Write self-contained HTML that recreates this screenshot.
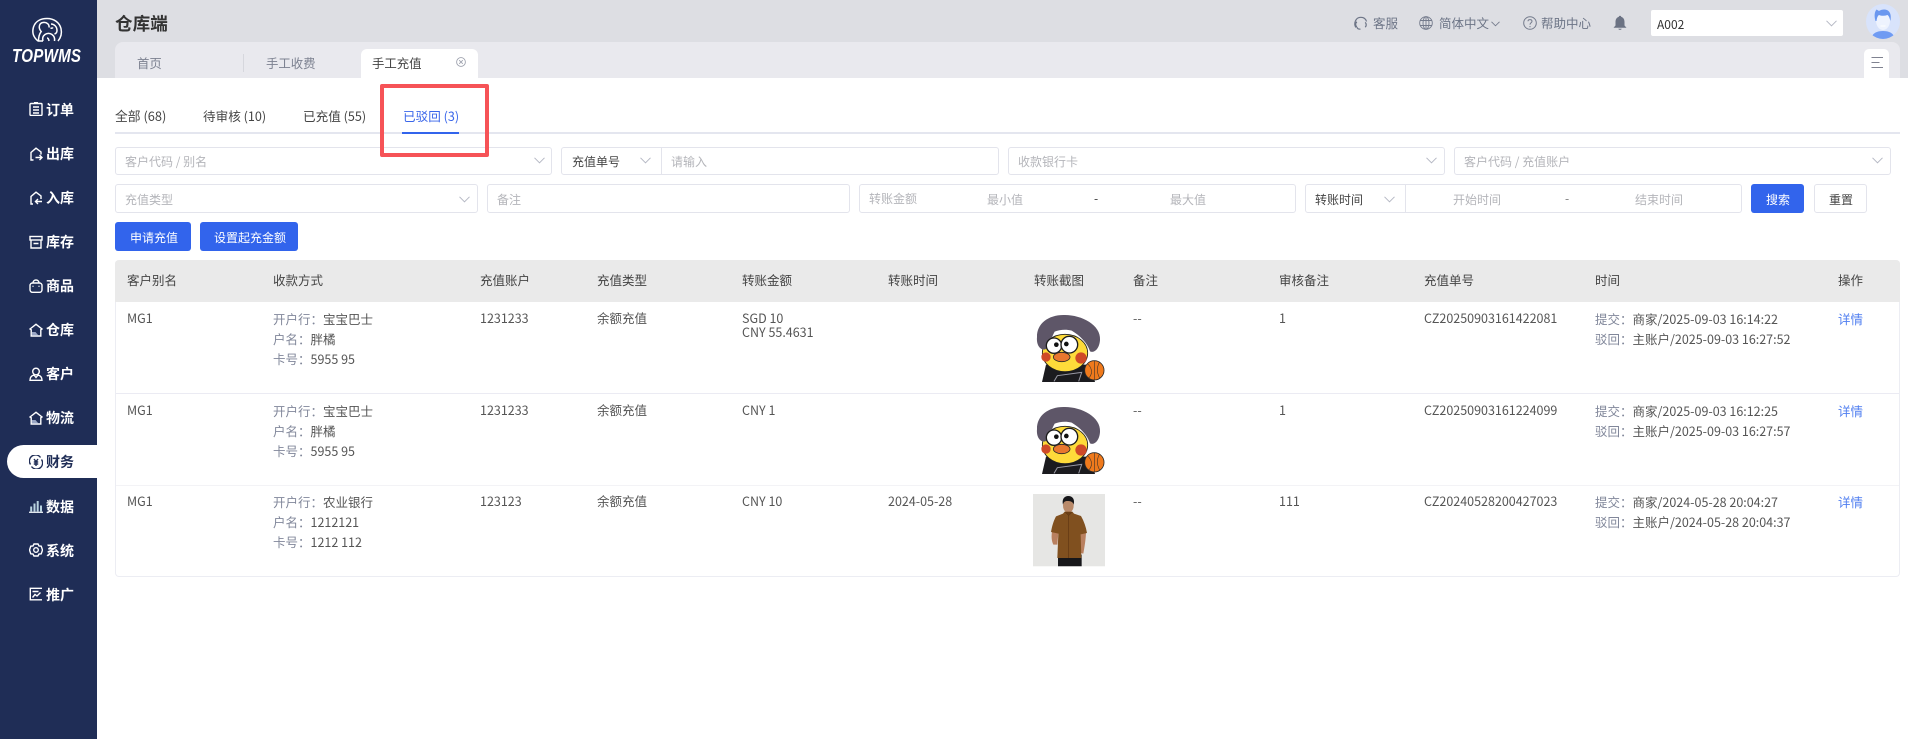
<!DOCTYPE html>
<html lang="zh"><head><meta charset="utf-8"><title>TOPWMS</title>
<style>
html,body{margin:0;padding:0;background:#fff}
body{width:1908px;height:739px;position:relative;overflow:hidden;font-family:"Noto Sans CJK SC","Liberation Sans",sans-serif;font-size:12.5px;color:#555}
div,svg{position:absolute}
.t{position:absolute;line-height:20px;height:20px;white-space:nowrap}
.b{position:absolute;box-sizing:border-box;background:#fff;border:1px solid #e3e4ec;border-radius:3px}
.ph{color:#b4b5ba}
.g{color:#81879a}
.h{color:#444}
.n{font-size:14px;font-weight:700;color:#fff;left:46px}
.ic{left:29px;width:14px;height:14px;fill:none;stroke:#fff;stroke-width:1.4}
.ch{fill:none;stroke:#b5b8c4;stroke-width:1}
.top{color:#6c7486;font-size:12.5px}
</style></head><body>

<!-- header -->
<div style="left:97px;top:0;width:1811px;height:78px;background:#dddee3"></div>
<div style="left:115px;top:42px;width:1785px;height:36px;background:#e9e9ee;border-radius:8px 8px 0 0"></div>
<div class="t" style="left:115px;top:14px;font-size:17.6px;font-weight:700;color:#333">仓库端</div>

<div class="t" style="left:137px;top:53px;color:#7c8190;font-size:12.4px">首页</div>
<div style="left:243px;top:54px;width:1px;height:18px;background:#d6d7dd"></div>
<div class="t" style="left:266px;top:53px;color:#7c8190;font-size:12.4px">手工收费</div>
<div style="left:361px;top:49px;width:117px;height:29px;background:#fff;border-radius:6px 6px 0 0"></div>
<div class="t" style="left:372px;top:53px;color:#444;font-size:12.4px">手工充值</div>
<svg style="left:456px;top:57px" width="10" height="10" viewBox="0 0 10 10" fill="none" stroke="#9ea2ae" stroke-width=".9"><circle cx="5" cy="5" r="4.4"/><path d="M3.2 3.2l3.6 3.6M6.8 3.2l-3.6 3.6"/></svg>
<div style="left:1864px;top:49px;width:25px;height:29px;background:#fff;border-radius:5px 5px 0 0"></div>
<svg style="left:1871px;top:56px" width="13" height="13" viewBox="0 0 13 13" fill="none" stroke="#7f8290" stroke-width="1"><path d="M.5 1.500h11.500M.5 6.500h8M.5 11.500h11.500"/></svg>

<svg style="left:1353px;top:16px" width="15" height="15" viewBox="0 0 15 15" fill="none" stroke="#6c7486" stroke-width="1.200"><path d="M2.800 11.500C.5 7.500 2.500 1.300 7.800 1.300c3 0 5 1.700 5.700 4.200"/><path d="M12 6.500c1.600.6 1.600 4 0 4.500"/><path d="M4 6c-1.800.6-1.800 4 0 4.800"/><path d="M4 11c0 1.500 1.500 2.200 3.500 2.200"/></svg>
<div class="t top" style="left:1373px;top:13px">客服</div>
<svg style="left:1419px;top:16px" width="14" height="14" viewBox="0 0 14 14" fill="none" stroke="#747b8c" stroke-width=".9"><circle cx="7" cy="7" r="6.300"/><ellipse cx="7" cy="7" rx="3" ry="6.300"/><path d="M1.300 4.500h11.400M1.300 9.500h11.400M7 .7v12.600"/></svg>
<div class="t top" style="left:1439px;top:13px">简体中文</div>
<svg style="left:1491px;top:21px" width="9" height="6" viewBox="0 0 9 6" fill="none" stroke="#747b8c" stroke-width=".9"><path d="M.5.800L4.500 4.800 8.500.800"/></svg>
<svg style="left:1523px;top:16px" width="14" height="14" viewBox="0 0 14 14" fill="none" stroke="#747b8c" stroke-width="1"><circle cx="7" cy="7" r="6.300"/><path d="M5 5.300C5 3 9 3 9 5.300 9 6.800 7 6.800 7 8.600"/><path d="M7 10v1.200"/></svg>
<div class="t top" style="left:1541px;top:13px">帮助中心</div>
<svg style="left:1613px;top:15px" width="14" height="16" viewBox="0 0 14 16" fill="#6b7283"><path d="M7 .8c.8 0 1.200.5 1.200 1.100C10.500 2.500 11.500 4.500 11.500 7v3.500L13.500 12.800H.5L2.500 10.500V7C2.500 4.500 3.500 2.500 5.800 1.900 5.800 1.300 6.200.8 7 .8z"/><path d="M5.300 13.800h3.400C8.500 15.200 5.500 15.200 5.300 13.800z"/></svg>
<div style="left:1651px;top:10px;width:192px;height:26px;background:#fff;border-radius:2px"></div>
<div class="t" style="left:1657px;top:15px;color:#333;font-size:12px">A002</div>
<svg class="ch" style="left:1826px;top:20px" width="11" height="7" viewBox="0 0 11 7"><path d="M.5.800L5.500 5.800 10.500.800"/></svg>
<svg style="left:1866px;top:4px" width="34" height="35" viewBox="0 0 34 35"><defs><clipPath id="av"><ellipse cx="17" cy="17.500" rx="17" ry="17.500"/></clipPath></defs><ellipse cx="17" cy="17.500" rx="17" ry="17.500" fill="#d8e3fb"/><g clip-path="url(#av)"><path d="M5 35C6 29 11 27 17 27s11 2 12 8z" fill="#6f9bf3"/><ellipse cx="17" cy="16.500" rx="7" ry="9.500" fill="#eef3fe"/><path d="M9.500 17C8 12 8.500 8 10.500 5.500l2.500 1.500c3-2 8-2 10 .5 2 2.500 2 5.500 1.500 9.500-1-3-1.500-5-3-6-3 1-6 1-8.500 0-1.500 1-2 3-2.500 6z" fill="#6a97ef"/><path d="M14.500 22h5" stroke="#fff" stroke-width="1"/></g></svg>

<!-- sidebar -->
<div style="left:0;top:0;width:97px;height:739px;background:#1f2d56"></div>
<svg style="left:30px;top:16px" width="35" height="28" viewBox="0 0 35 28" fill="none" stroke="#fff" stroke-width="1.500"><path d="M8 25C3 21 2 16 3.500 11 5.500 5 11 2.500 17 2.500c7 0 12.500 4 14 10 1 4.500 0 9-3 12.500"/><path d="M13 25c-1-3 0-5 2-6.500 2-1.500 5-1.500 7 0 2 1.500 3 4 2.500 6.500"/><path d="M19 25c-.3-2-1-3-2-3M13 25H8.500c0-4 .8-7 2.700-9.500C8 12 9 7 13 6.500c4-.5 6.500 2 6 5M21 8c3 0 6 2.500 6 6.500 0 2-1 3-2.500 3.500M20.500 12c1 .3 2 .3 2.500-.5"/></svg>
<div class="t" style="left:12px;top:46px;height:20px;line-height:20px;font-family:'Liberation Sans',sans-serif;font-style:italic;font-weight:700;font-size:18px;color:#fff;transform:scaleX(.84);transform-origin:0 50%;letter-spacing:.3px">TOPWMS</div>

<div style="left:7px;top:445px;width:90px;height:33px;background:#fff;border-radius:17px 0 0 17px"></div>

<svg class="ic" style="top:102px" viewBox="0 0 14 14"><rect x="1" y="1.500" width="12" height="12" rx="1"/><path d="M5 .7h4M4 5h6M4 8h6M4 11h6"/></svg>
<div class="t n" style="top:100px">订单</div>
<svg class="ic" style="top:147px" viewBox="0 0 14 14"><path d="M4.500 13H2V5.500L7 1.200 12 5v2.500"/><path d="M6.500 10.500H13M10.500 8l2.500 2.500L10.500 13"/></svg>
<div class="t n" style="top:144px">出库</div>
<svg class="ic" style="top:191px" viewBox="0 0 14 14"><path d="M4 13H2V5.500L7 1.200 12 5v3"/><path d="M13 10.500H6.500M9 8l-2.500 2.500L9 13"/></svg>
<div class="t n" style="top:188px">入库</div>
<svg class="ic" style="top:235px" viewBox="0 0 14 14"><rect x="1" y="1.500" width="12" height="3.500"/><path d="M2 5v8h10V5M4.500 8.500h5"/></svg>
<div class="t n" style="top:232px">库存</div>
<svg class="ic" style="top:279px" viewBox="0 0 14 14"><rect x="1" y="4" width="12" height="9.300" rx="2.500"/><path d="M4 4c0-4 6-4 6 0M4 6.800v1M10 6.800v1"/></svg>
<div class="t n" style="top:276px">商品</div>
<svg class="ic" style="top:323px" viewBox="0 0 14 14"><path d="M1 6L7 1.300 13 6l-1.200.8V13H2.200V6.800z"/><path d="M3 9h3.500l3 3.500H3z" fill="#9aa6c4" stroke="none"/></svg>
<div class="t n" style="top:320px">仓库</div>
<svg class="ic" style="top:367px" viewBox="0 0 14 14"><circle cx="7" cy="4.500" r="3.300"/><path d="M1 13.300C1 10 3 8.500 5 8l2 2.500L9 8c2 .5 4 2 4 5.300z"/></svg>
<div class="t n" style="top:364px">客户</div>
<svg class="ic" style="top:411px" viewBox="0 0 14 14"><path d="M1 6L7 1.300 13 6l-1.200.8V13H2.200V6.800z"/><path d="M3 9h3.500l3 3.500H3z" fill="#9aa6c4" stroke="none"/></svg>
<div class="t n" style="top:408px">物流</div>
<svg class="ic" style="top:455px;stroke:#1f2d56" viewBox="0 0 14 14"><path d="M1.500 9.500A6 6 0 0 1 11.500 2.500M12.500 4.500A6 6 0 0 1 2.500 11.500"/><path d="M5 4l2 2.500L9 4M4.800 7h4.400M4.800 9h4.400M7 6.500V11"/></svg>
<div class="t n" style="top:452px;color:#1f2d56">财务</div>
<svg class="ic" style="top:499px;stroke:#b9d3e0" viewBox="0 0 14 14"><path d="M0 13.300h14" stroke="#dfe5ec"/><rect x="1.200" y="7.500" width="2" height="5" fill="#b9d3e0" stroke="none"/><rect x="4.500" y="4.500" width="2" height="8" fill="#b9d3e0" stroke="none"/><rect x="7.700" y="2" width="2" height="10.500" fill="#b9d3e0" stroke="none"/><rect x="11" y="6.500" width="2" height="6" fill="#b9d3e0" stroke="none"/></svg>
<div class="t n" style="top:497px">数据</div>
<svg class="ic" style="top:543px" viewBox="0 0 14 14"><path d="M5 1h4l1 2 2.200.2L13.500 7l-1.300 3.800L10 11l-1 2H5l-1-2-2.200-.2L.5 7l1.300-3.800L4 3z"/><circle cx="7" cy="7" r="2.300"/></svg>
<div class="t n" style="top:541px">系统</div>
<svg class="ic" style="top:587px" viewBox="0 0 14 14"><path d="M13 1.300H1.300v11.500H13"/><path d="M3.500 10.500L6 7.500l2 1.500 3.500-3.500M3.500 4.500h6"/></svg>
<div class="t n" style="top:585px">推广</div>

<!-- status tabs -->
<div style="left:115px;top:132px;width:1785px;height:2px;background:#e4e6ef"></div>
<div class="t" style="left:115px;top:106px;color:#444;font-size:12.8px">全部 (68)</div>
<div class="t" style="left:203px;top:106px;color:#444;font-size:12.6px">待审核 (10)</div>
<div class="t" style="left:303px;top:106px;color:#444;font-size:12.6px">已充值 (55)</div>
<div class="t" style="left:403px;top:106px;color:#3a66ea;font-size:12.6px">已驳回 (3)</div>
<div style="left:402px;top:132px;width:57px;height:2px;background:#3264ec"></div>

<!-- filter row 1 -->
<div class="b" style="left:115px;top:147px;width:437px;height:28px"></div>
<div class="t ph" style="left:125px;top:152px;font-size:12px">客户代码 / 别名</div>
<svg class="ch" style="left:534px;top:157px" width="11" height="7" viewBox="0 0 11 7"><path d="M.5.800L5.500 5.800 10.500.800"/></svg>
<div class="b" style="left:561px;top:147px;width:438px;height:28px"></div>
<div style="left:661px;top:148px;width:1px;height:26px;background:#e3e4ec"></div>
<div class="t" style="left:572px;top:152px;color:#444;font-size:12px">充值单号</div>
<svg class="ch" style="left:640px;top:157px" width="11" height="7" viewBox="0 0 11 7"><path d="M.5.800L5.500 5.800 10.500.800"/></svg>
<div class="t ph" style="left:671px;top:152px;font-size:12px">请输入</div>
<div class="b" style="left:1008px;top:147px;width:437px;height:28px"></div>
<div class="t ph" style="left:1018px;top:152px;font-size:12px">收款银行卡</div>
<svg class="ch" style="left:1426px;top:157px" width="11" height="7" viewBox="0 0 11 7"><path d="M.5.800L5.500 5.800 10.500.800"/></svg>
<div class="b" style="left:1454px;top:147px;width:437px;height:28px"></div>
<div class="t ph" style="left:1464px;top:152px;font-size:12px">客户代码 / 充值账户</div>
<svg class="ch" style="left:1872px;top:157px" width="11" height="7" viewBox="0 0 11 7"><path d="M.5.800L5.500 5.800 10.500.800"/></svg>

<!-- filter row 2 -->
<div class="b" style="left:115px;top:184px;width:363px;height:29px"></div>
<div class="t ph" style="left:125px;top:190px;font-size:12px">充值类型</div>
<svg class="ch" style="left:459px;top:196px" width="11" height="7" viewBox="0 0 11 7"><path d="M.5.800L5.500 5.800 10.500.800"/></svg>
<div class="b" style="left:487px;top:184px;width:363px;height:29px"></div>
<div class="t ph" style="left:497px;top:190px;font-size:12px">备注</div>
<div class="b" style="left:859px;top:184px;width:437px;height:29px"></div>
<div class="t ph" style="left:869px;top:189px;font-size:12px">转账金额</div>
<div class="t ph" style="left:987px;top:190px;font-size:12px">最小值</div>
<div class="t" style="left:1094px;top:189px;color:#333;font-size:12px">-</div>
<div class="t ph" style="left:1170px;top:190px;font-size:12px">最大值</div>
<div class="b" style="left:1305px;top:184px;width:437px;height:29px"></div>
<div style="left:1405px;top:185px;width:1px;height:27px;background:#e3e4ec"></div>
<div class="t" style="left:1315px;top:190px;color:#444;font-size:12px">转账时间</div>
<svg class="ch" style="left:1384px;top:196px" width="11" height="7" viewBox="0 0 11 7"><path d="M.5.800L5.500 5.800 10.500.800"/></svg>
<div class="t ph" style="left:1453px;top:190px;font-size:12px">开始时间</div>
<div class="t ph" style="left:1565px;top:189px;font-size:12px;color:#777">-</div>
<div class="t ph" style="left:1635px;top:190px;font-size:12px">结束时间</div>
<div style="left:1751px;top:184px;width:53px;height:29px;background:#3264ec;border-radius:3px"></div>
<div class="t" style="left:1766px;top:190px;color:#fff;font-size:12px">搜索</div>
<div class="b" style="left:1814px;top:184px;width:53px;height:29px"></div>
<div class="t" style="left:1829px;top:190px;color:#444;font-size:12px">重置</div>

<div style="left:115px;top:222px;width:76px;height:29px;background:#3264ec;border-radius:3px"></div>
<div class="t" style="left:130px;top:228px;color:#fff;font-size:12px">申请充值</div>
<div style="left:200px;top:222px;width:98px;height:29px;background:#3264ec;border-radius:3px"></div>
<div class="t" style="left:214px;top:228px;color:#fff;font-size:12px">设置起充金额</div>

<!-- annotation -->
<div style="left:380px;top:84px;width:109px;height:73px;box-sizing:border-box;border:4px solid #f65357;border-radius:2px"></div>

<!-- table -->
<div style="left:115px;top:260px;width:1785px;height:317px;box-sizing:border-box;border:1px solid #ecedf3;border-top:0;border-radius:4px"></div>
<div style="left:115px;top:260px;width:1785px;height:42px;background:#eaeaea;border-radius:4px 4px 0 0"></div>
<div style="left:116px;top:393px;width:1783px;height:1px;background:#ebebf3"></div>
<div style="left:116px;top:485px;width:1783px;height:1px;background:#f3f3f6"></div>

<div class="t h" style="left:127px;top:270px">客户别名</div>
<div class="t h" style="left:273px;top:270px">收款方式</div>
<div class="t h" style="left:480px;top:270px">充值账户</div>
<div class="t h" style="left:597px;top:270px">充值类型</div>
<div class="t h" style="left:742px;top:270px">转账金额</div>
<div class="t h" style="left:888px;top:270px">转账时间</div>
<div class="t h" style="left:1034px;top:270px">转账截图</div>
<div class="t h" style="left:1133px;top:270px">备注</div>
<div class="t h" style="left:1279px;top:270px">审核备注</div>
<div class="t h" style="left:1424px;top:270px">充值单号</div>
<div class="t h" style="left:1595px;top:270px">时间</div>
<div class="t h" style="left:1838px;top:270px">操作</div>

<!-- row 1 -->
<div class="t" style="left:127px;top:308px">MG1</div>
<div class="t" style="left:273px;top:309px"><span class="g">开户行：</span>宝宝巴士</div>
<div class="t" style="left:273px;top:329px"><span class="g">户名：</span>胖橘</div>
<div class="t" style="left:273px;top:349px"><span class="g">卡号：</span>5955 95</div>
<div class="t" style="left:480px;top:308px">1231233</div>
<div class="t" style="left:597px;top:308px">余额充值</div>
<div class="t" style="left:742px;top:308px">SGD 10</div>
<div class="t" style="left:742px;top:322px">CNY 55.4631</div>
<div class="t" style="left:1133px;top:308px">--</div>
<div class="t" style="left:1279px;top:308px">1</div>
<div class="t" style="left:1424px;top:308px">CZ20250903161422081</div>
<div class="t" style="left:1595px;top:309px"><span class="g">提交：</span>商家/2025-09-03 16:14:22</div>
<div class="t" style="left:1595px;top:329px"><span class="g">驳回：</span>主账户/2025-09-03 16:27:52</div>
<div class="t" style="left:1838px;top:309px;color:#4f7ef0">详情</div>

<!-- row 2 -->
<div class="t" style="left:127px;top:400px">MG1</div>
<div class="t" style="left:273px;top:401px"><span class="g">开户行：</span>宝宝巴士</div>
<div class="t" style="left:273px;top:421px"><span class="g">户名：</span>胖橘</div>
<div class="t" style="left:273px;top:441px"><span class="g">卡号：</span>5955 95</div>
<div class="t" style="left:480px;top:400px">1231233</div>
<div class="t" style="left:597px;top:400px">余额充值</div>
<div class="t" style="left:742px;top:400px">CNY 1</div>
<div class="t" style="left:1133px;top:400px">--</div>
<div class="t" style="left:1279px;top:400px">1</div>
<div class="t" style="left:1424px;top:400px">CZ20250903161224099</div>
<div class="t" style="left:1595px;top:401px"><span class="g">提交：</span>商家/2025-09-03 16:12:25</div>
<div class="t" style="left:1595px;top:421px"><span class="g">驳回：</span>主账户/2025-09-03 16:27:57</div>
<div class="t" style="left:1838px;top:401px;color:#4f7ef0">详情</div>

<!-- row 3 -->
<div class="t" style="left:127px;top:491px">MG1</div>
<div class="t" style="left:273px;top:492px"><span class="g">开户行：</span>农业银行</div>
<div class="t" style="left:273px;top:512px"><span class="g">户名：</span>1212121</div>
<div class="t" style="left:273px;top:532px"><span class="g">卡号：</span>1212 112</div>
<div class="t" style="left:480px;top:491px">123123</div>
<div class="t" style="left:597px;top:491px">余额充值</div>
<div class="t" style="left:742px;top:491px">CNY 10</div>
<div class="t" style="left:888px;top:491px">2024-05-28</div>
<div class="t" style="left:1133px;top:491px">--</div>
<div class="t" style="left:1279px;top:491px">111</div>
<div class="t" style="left:1424px;top:491px">CZ20240528200427023</div>
<div class="t" style="left:1595px;top:492px"><span class="g">提交：</span>商家/2024-05-28 20:04:27</div>
<div class="t" style="left:1595px;top:512px"><span class="g">驳回：</span>主账户/2024-05-28 20:04:37</div>
<div class="t" style="left:1838px;top:492px;color:#4f7ef0">详情</div>

<!-- duck images -->
<svg style="left:1030px;top:313.300px" width="76.700" height="71.700" viewBox="150 190 230 215">
<path d="M186 397L198 345H330L345 397z" fill="#1b1b1f"/>
<path d="M222 395L232 378 305 368 296 395" fill="none" stroke="#9a9aa5" stroke-width="3"/>
<circle cx="343" cy="362" r="29" fill="#f07a1c" stroke="#2a2a2a" stroke-width="2.500"/>
<path d="M343 333V391M322 342C338 355 338 375 325 386M358 338C350 352 350 372 360 386" fill="none" stroke="#2a2a2a" stroke-width="1.600"/>
<ellipse cx="255" cy="310" rx="68" ry="56" fill="#fedb3a" stroke="#222" stroke-width="2.500"/>
<path d="M171 262C170 222 205 196 250 196 302 194 363 225 360 270 359 295 344 312 330 305 322 280 300 258 275 243 258 238 238 240 224 246 216 260 210 280 200 296 190 306 168 295 171 262z" fill="#5e5668"/>
<circle cx="222" cy="288" r="23" fill="#fff" stroke="#1c1c1c" stroke-width="4"/>
<circle cx="268" cy="285" r="25" fill="#fff" stroke="#1c1c1c" stroke-width="4"/>
<circle cx="229" cy="285" r="7" fill="#111"/><circle cx="259" cy="283" r="7" fill="#111"/>
<circle cx="198" cy="322" r="14" fill="#cf4a28"/><circle cx="303" cy="325" r="17" fill="#cf4a28"/>
<ellipse cx="245" cy="322" rx="25" ry="14" fill="#e8772e" stroke="#2a2a2a" stroke-width="2.500"/>
</svg>
<svg style="left:1030px;top:405.300px" width="76.700" height="71.700" viewBox="150 190 230 215">
<path d="M186 397L198 345H330L345 397z" fill="#1b1b1f"/>
<path d="M222 395L232 378 305 368 296 395" fill="none" stroke="#9a9aa5" stroke-width="3"/>
<circle cx="343" cy="362" r="29" fill="#f07a1c" stroke="#2a2a2a" stroke-width="2.500"/>
<path d="M343 333V391M322 342C338 355 338 375 325 386M358 338C350 352 350 372 360 386" fill="none" stroke="#2a2a2a" stroke-width="1.600"/>
<ellipse cx="255" cy="310" rx="68" ry="56" fill="#fedb3a" stroke="#222" stroke-width="2.500"/>
<path d="M171 262C170 222 205 196 250 196 302 194 363 225 360 270 359 295 344 312 330 305 322 280 300 258 275 243 258 238 238 240 224 246 216 260 210 280 200 296 190 306 168 295 171 262z" fill="#5e5668"/>
<circle cx="222" cy="288" r="23" fill="#fff" stroke="#1c1c1c" stroke-width="4"/>
<circle cx="268" cy="285" r="25" fill="#fff" stroke="#1c1c1c" stroke-width="4"/>
<circle cx="229" cy="285" r="7" fill="#111"/><circle cx="259" cy="283" r="7" fill="#111"/>
<circle cx="198" cy="322" r="14" fill="#cf4a28"/><circle cx="303" cy="325" r="17" fill="#cf4a28"/>
<ellipse cx="245" cy="322" rx="25" ry="14" fill="#e8772e" stroke="#2a2a2a" stroke-width="2.500"/>
</svg>
<!-- man image -->
<svg style="left:1033px;top:494.300px" width="72" height="72.300" viewBox="159 733 216 217">
<rect x="159" y="733" width="216" height="217" fill="#e6e6e4"/>
<path d="M234 915H305V950H234z" fill="#17171a"/>
<path d="M216 845C214 860 214 872 220 885L232 885 235 848zM318 845C318 865 314 890 310 912L300 910 302 848z" fill="#b9805f"/>
<ellipse cx="265" cy="768" rx="16" ry="21" fill="#b98a6a"/>
<path d="M249 765C245 746 255 739 265 739 278 739 285 749 281 765 278 755 270 754 262 754 254 754 251 757 249 765z" fill="#17171a"/>
<path d="M254 786H277L282 792 303 799C312 815 318 832 321 850L302 854 304 925H232L235 852 213 847C216 830 220 815 228 800L249 792z" fill="#80501f"/>
<path d="M266 795V925" stroke="#5f3712" stroke-width="2"/>
<path d="M255 787L266 798 277 787" fill="#6a3e16" stroke="#5a3410" stroke-width="1.500"/>
</svg>
</body></html>
